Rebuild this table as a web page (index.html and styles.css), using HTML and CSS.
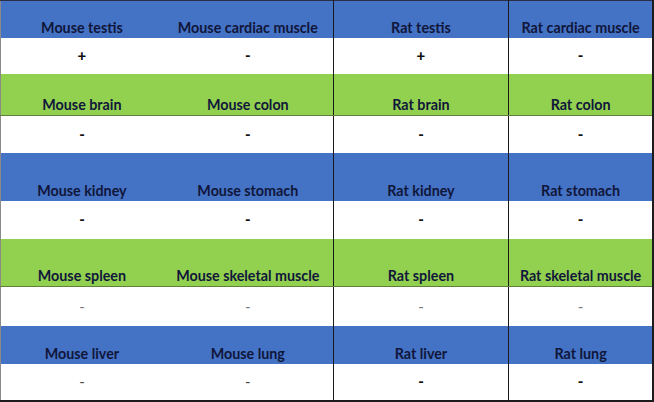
FILE: index.html
```html
<!DOCTYPE html>
<html>
<head>
<meta charset="utf-8">
<link rel="stylesheet" href="styles.css">
</head>
<body>
<table class="grid">
  <colgroup>
    <col class="c1"><col class="c2"><col class="c3"><col class="c4">
  </colgroup>
  <tr class="head blue h37">
    <th>Mouse testis</th><th>Mouse cardiac muscle</th><th class="split">Rat testis</th><th class="split">Rat cardiac muscle</th>
  </tr>
  <tr class="val h36">
    <td>+</td><td>-</td><td class="split">+</td><td class="split">-</td>
  </tr>
  <tr class="head green h42">
    <th>Mouse brain</th><th>Mouse colon</th><th class="split">Rat brain</th><th class="split">Rat colon</th>
  </tr>
  <tr class="val h37">
    <td>-</td><td>-</td><td class="split">-</td><td class="split">-</td>
  </tr>
  <tr class="head blue h48">
    <th>Mouse kidney</th><th>Mouse stomach</th><th class="split">Rat kidney</th><th class="split">Rat stomach</th>
  </tr>
  <tr class="val h38">
    <td>-</td><td>-</td><td class="split">-</td><td class="split">-</td>
  </tr>
  <tr class="head green h48">
    <th>Mouse spleen</th><th>Mouse skeletal muscle</th><th class="split">Rat spleen</th><th class="split">Rat skeletal muscle</th>
  </tr>
  <tr class="val light h39">
    <td>-</td><td>-</td><td class="split">-</td><td class="split">-</td>
  </tr>
  <tr class="head blue h38">
    <th>Mouse liver</th><th>Mouse lung</th><th class="split">Rat liver</th><th class="split">Rat lung</th>
  </tr>
  <tr class="val h37 last">
    <td class="thin">-</td><td class="thin">-</td><td class="split">-</td><td class="split">-</td>
  </tr>
</table>
</body>
</html>
```

FILE: styles.css
```css
html, body {
  margin: 0;
  padding: 0;
  background: #ffffff;
}

.grid {
  width: 654px;
  border-collapse: collapse;
  table-layout: fixed;
  font-family: Lato, "Open Sans", sans-serif;
  border-top: 1px solid #2a2f45;
  border-left: 1px solid #8a8a8a;
  border-right: 2px solid #1c1c1c;
  border-bottom: 2px solid #1c1c1c;
}

.c1 { width: 162px; }
.c2 { width: 170px; }
.c3 { width: 175px; }
.c4 { width: 144px; }

.grid th,
.grid td {
  padding: 0;
  text-align: center;
}

.split {
  border-left: 1px solid #1a1a1a;
}

.head th {
  font-weight: 700;
  font-size: 14.3px;
  color: #10163a;
  vertical-align: bottom;
  padding-bottom: 2px;
  line-height: 17px;
}

.blue th { background: #4472c4; }
.green th { background: #92d050; border-bottom: 1px solid #5f7f3a; }

.val td {
  font-weight: 900;
  font-size: 15px;
  color: #111111;
  vertical-align: middle;
  line-height: 17px;
  background: #ffffff;
}

.val.light td {
  font-weight: 400;
  color: #777777;
}

.val td.thin {
  font-weight: 400;
  color: #444444;
}

.h36 { height: 36px; }
.h37 { height: 37px; }
.h38 { height: 38px; }
.h39 { height: 39px; }
.h42 { height: 42px; }
.h48 { height: 48px; }
```
